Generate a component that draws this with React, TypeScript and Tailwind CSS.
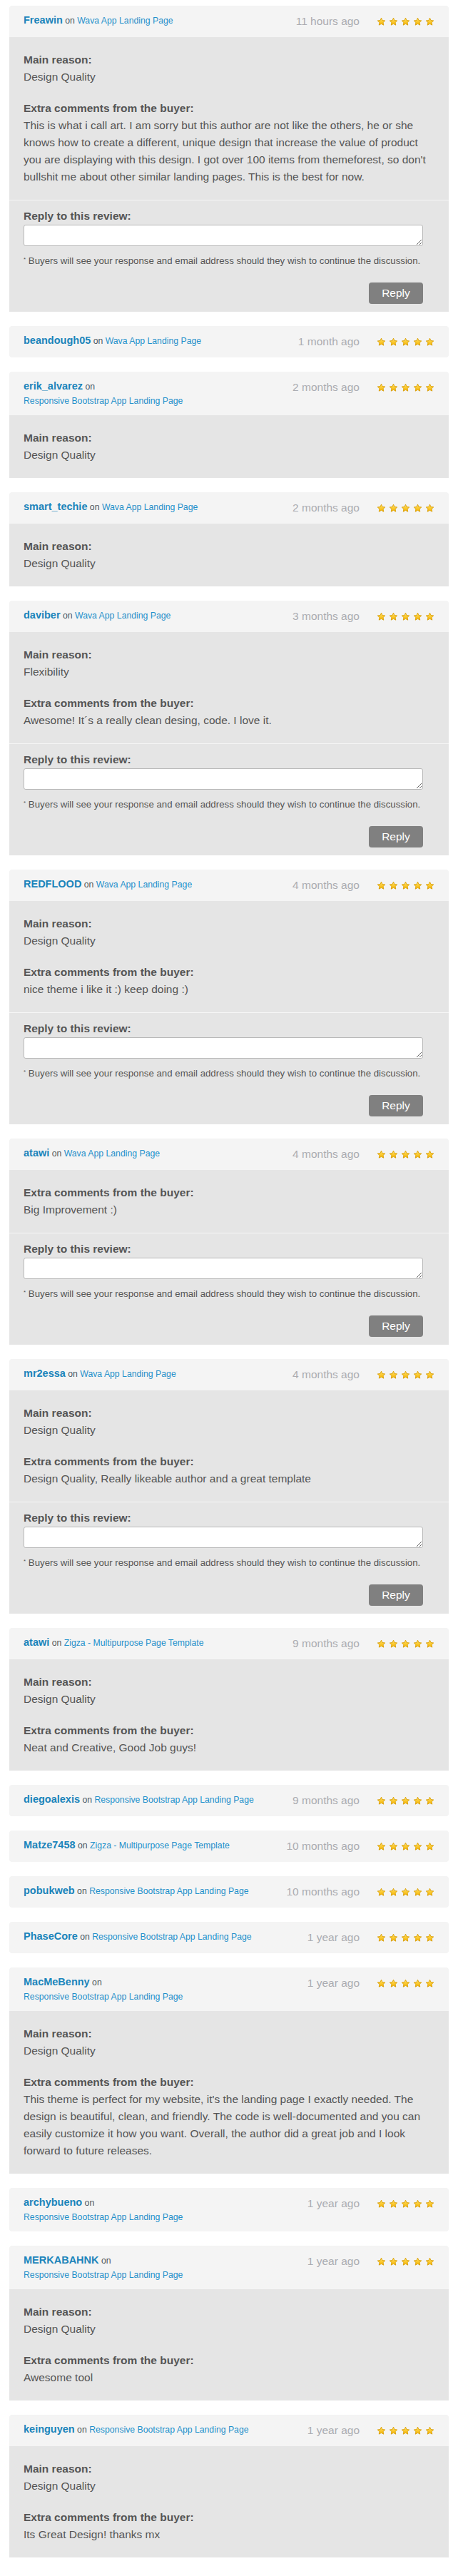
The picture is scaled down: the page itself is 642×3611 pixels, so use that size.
import { useId } from "react";

type Review = {
  user: string;
  item: string;
  time: string;
  twoLine?: boolean;
  reason?: string;
  comment?: string;
  reply?: boolean;
};

const WAVA = "Wava App Landing Page";
const RBAL = "Responsive Bootstrap App Landing Page";
const ZIGZA = "Zigza - Multipurpose Page Template";

const reviews: Review[] = [
  {
    user: "Freawin",
    item: WAVA,
    time: "11 hours ago",
    reason: "Design Quality",
    comment:
      "This is what i call art. I am sorry but this author are not like the others, he or she knows how to create a different, unique design that increase the value of product you are displaying with this design. I got over 100 items from themeforest, so don't bullshit me about other similar landing pages. This is the best for now.",
    reply: true,
  },
  { user: "beandough05", item: WAVA, time: "1 month ago" },
  { user: "erik_alvarez", item: RBAL, time: "2 months ago", twoLine: true, reason: "Design Quality" },
  { user: "smart_techie", item: WAVA, time: "2 months ago", reason: "Design Quality" },
  {
    user: "daviber",
    item: WAVA,
    time: "3 months ago",
    reason: "Flexibility",
    comment: "Awesome! It´s a really clean desing, code. I love it.",
    reply: true,
  },
  {
    user: "REDFLOOD",
    item: WAVA,
    time: "4 months ago",
    reason: "Design Quality",
    comment: "nice theme i like it :) keep doing :)",
    reply: true,
  },
  { user: "atawi", item: WAVA, time: "4 months ago", comment: "Big Improvement :)", reply: true },
  {
    user: "mr2essa",
    item: WAVA,
    time: "4 months ago",
    reason: "Design Quality",
    comment: "Design Quality, Really likeable author and a great template",
    reply: true,
  },
  {
    user: "atawi",
    item: ZIGZA,
    time: "9 months ago",
    reason: "Design Quality",
    comment: "Neat and Creative, Good Job guys!",
  },
  { user: "diegoalexis", item: RBAL, time: "9 months ago" },
  { user: "Matze7458", item: ZIGZA, time: "10 months ago" },
  { user: "pobukweb", item: RBAL, time: "10 months ago" },
  { user: "PhaseCore", item: RBAL, time: "1 year ago" },
  {
    user: "MacMeBenny",
    item: RBAL,
    time: "1 year ago",
    twoLine: true,
    reason: "Design Quality",
    comment:
      "This theme is perfect for my website, it's the landing page I exactly needed. The design is beautiful, clean, and friendly. The code is well-documented and you can easily customize it how you want. Overall, the author did a great job and I look forward to future releases.",
  },
  { user: "archybueno", item: RBAL, time: "1 year ago", twoLine: true },
  {
    user: "MERKABAHNK",
    item: RBAL,
    time: "1 year ago",
    twoLine: true,
    reason: "Design Quality",
    comment: "Awesome tool",
  },
  {
    user: "keinguyen",
    item: RBAL,
    time: "1 year ago",
    reason: "Design Quality",
    comment: "Its Great Design! thanks mx",
  },
];

function Star() {
  const id = useId();
  return (
    <svg width="13" height="13" viewBox="0 0 24 24" className="block">
      <defs>
        <linearGradient id={id} x1="0" y1="0" x2="0" y2="1">
          <stop offset="0" stopColor="#ffe066" />
          <stop offset="1" stopColor="#f7b500" />
        </linearGradient>
      </defs>
      <path
        d="M12 2.2l2.9 6.2 6.8.8-5 4.7 1.3 6.7L12 17.3l-6 3.3 1.3-6.7-5-4.7 6.8-.8z"
        fill={`url(#${id})`}
        stroke="#d69a00"
        strokeWidth="1.6"
        strokeLinejoin="round"
      />
    </svg>
  );
}

function ReviewCard({ review }: { review: Review }) {
  const hasBody = !!(review.reason || review.comment);
  return (
    <div className="w-full">
      <div
        className={`flex items-start justify-between bg-[#f4f4f4] px-5 py-[10px] ${
          hasBody ? "rounded-t-[4px]" : "rounded-[4px]"
        }`}
      >
        <div className="text-[12.25px] leading-5 text-[#4d5660]">
          <span className="text-[14.5px] font-bold text-[#1a84bb]">{review.user}</span> on{" "}
          {review.twoLine && <br />}
          <span className="text-[#1f90cb]">{review.item}</span>
        </div>
        <div className="flex items-center gap-6">
          <span className="text-[15.5px] leading-6 text-[#abacb1]">{review.time}</span>
          <div className="flex gap-1">
            {[0, 1, 2, 3, 4].map((i) => (
              <Star key={i} />
            ))}
          </div>
        </div>
      </div>
      {hasBody && (
        <div className="bg-[#e5e5e5] text-[15.5px] leading-6 text-[#555]">
          <div className="flex flex-col gap-5 px-5 py-5">
            {review.reason && (
              <div>
                <p className="font-bold">Main reason:</p>
                <p>{review.reason}</p>
              </div>
            )}
            {review.comment && (
              <div>
                <p className="font-bold">Extra comments from the buyer:</p>
                <p>{review.comment}</p>
              </div>
            )}
          </div>
          {review.reply && (
            <div className="border-t border-[#f6f6f6] pt-[10px] pb-[11px] pl-5 pr-[36px]">
              <p className="font-bold">Reply to this review:</p>
              <textarea className="block h-[30px] w-full rounded-[3px] border border-[#b8b8b8] bg-white" />
              <p className="mt-3 text-[13.25px] leading-[18px] text-[#555]">
                <sup className="text-[8px]">*</sup> Buyers will see your response and email address
                should they wish to continue the discussion.
              </p>
              <div className="mt-[21px] flex justify-end">
                <button className="h-[30px] w-[76px] rounded-[4px] bg-[#808080] text-[15.5px] text-white">
                  Reply
                </button>
              </div>
            </div>
          )}
        </div>
      )}
    </div>
  );
}

export default function App() {
  return (
    <div className="min-h-screen bg-white font-['Liberation_Sans',Arial,sans-serif]">
      <div className="flex flex-col gap-5 pt-2 pb-[22px] pl-[13px] pr-[13px]">
        {reviews.map((review, i) => (
          <ReviewCard key={i} review={review} />
        ))}
      </div>
    </div>
  );
}
